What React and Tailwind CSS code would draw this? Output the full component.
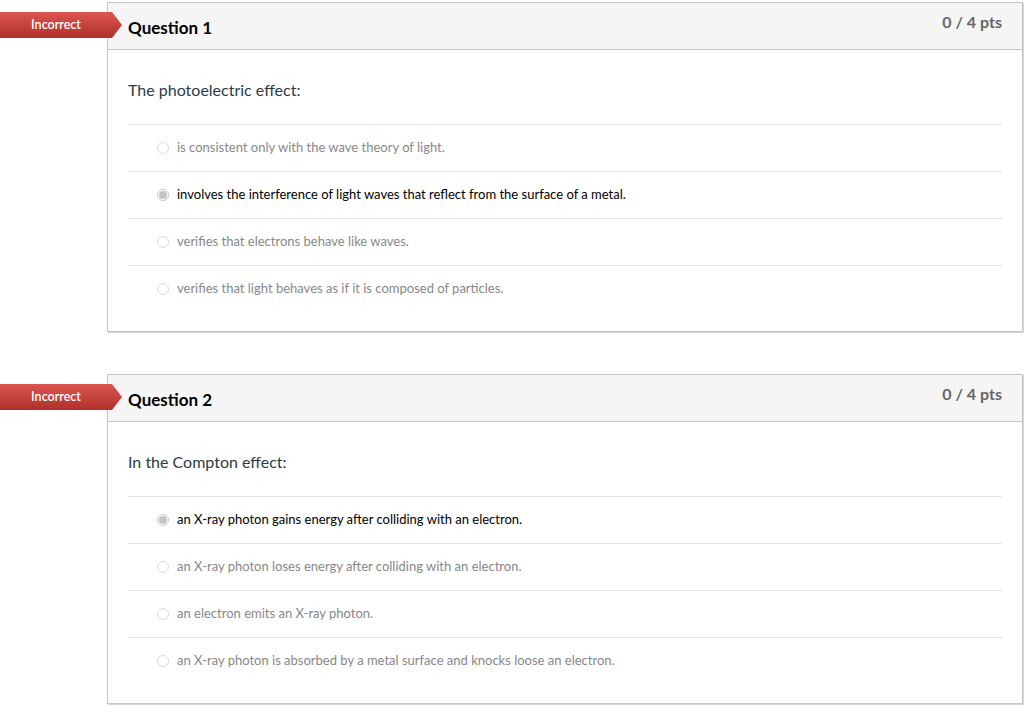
import React from "react";

const questions = [
  {
    title: "Question 1",
    pts: "0 / 4 pts",
    text: "The photoelectric effect:",
    answers: [
      "is consistent only with the wave theory of light.",
      "involves the interference of light waves that reflect from the surface of a metal.",
      "verifies that electrons behave like waves.",
      "verifies that light behaves as if it is composed of particles.",
    ],
    selected: 1,
  },
  {
    title: "Question 2",
    pts: "0 / 4 pts",
    text: "In the Compton effect:",
    answers: [
      "an X-ray photon gains energy after colliding with an electron.",
      "an X-ray photon loses energy after colliding with an electron.",
      "an electron emits an X-ray photon.",
      "an X-ray photon is absorbed by a metal surface and knocks loose an electron.",
    ],
    selected: 0,
  },
];

const Radio = ({ checked }) =>
  checked ? (
    <span className="w-[12px] h-[12px] rounded-full border border-[#c8c8c8] bg-white flex items-center justify-center shrink-0">
      <span className="w-[8px] h-[8px] rounded-full bg-[#c4c4c4]" />
    </span>
  ) : (
    <span className="w-[12px] h-[12px] rounded-full border border-[#dcdcdc] bg-white shrink-0" />
  );

const Question = ({ q }) => (
  <div className="relative">
    {/* Incorrect ribbon */}
    <div className="absolute left-0 top-[10px] z-10 w-[122px] h-[26px] [clip-path:polygon(0_0,112px_0,122px_50%,112px_100%,0_100%)] bg-gradient-to-b from-[#dc5550] to-[#b0302b] flex items-center">
      <span className="w-[112px] text-center text-white text-[12.5px] font-semibold">Incorrect</span>
    </div>

    <div className="ml-[107px] mr-[1px] border border-[#c4c4c4] shadow-[1px_1px_0_#d6d6d6] bg-white">
      {/* Header */}
      <div className="h-[47px] bg-[#f5f5f5] border-b border-[#c4c4c4] flex justify-between px-[20px]">
        <div className="pt-[13px] text-[17px] font-bold text-black leading-[24px]">{q.title}</div>
        <div className="pt-[7px] text-[16px] font-bold text-[#666] leading-[24px]">{q.pts}</div>
      </div>

      {/* Body */}
      <div className="px-[20px] pt-[28px] pb-[19px]">
        <div className="text-[16px] text-[#2d3b45] leading-[24px] mb-[22px]">{q.text}</div>
        <div>
          {q.answers.map((a, i) => (
            <div
              key={i}
              className="h-[47px] border-t border-[#e4e4e4] flex items-center pl-[29px] gap-[8px]"
            >
              <Radio checked={i === q.selected} />
              <span
                className={
                  "text-[13px] " + (i === q.selected ? "text-black" : "text-[#888]")
                }
              >
                {a}
              </span>
            </div>
          ))}
        </div>
      </div>
    </div>
  </div>
);

export default function App() {
  return (
    <div className="bg-white w-[1024px] h-[706px] pt-[2px] font-['Lato',sans-serif] flex flex-col gap-[42px] overflow-hidden">
      {questions.map((q) => (
        <Question key={q.title} q={q} />
      ))}
    </div>
  );
}
